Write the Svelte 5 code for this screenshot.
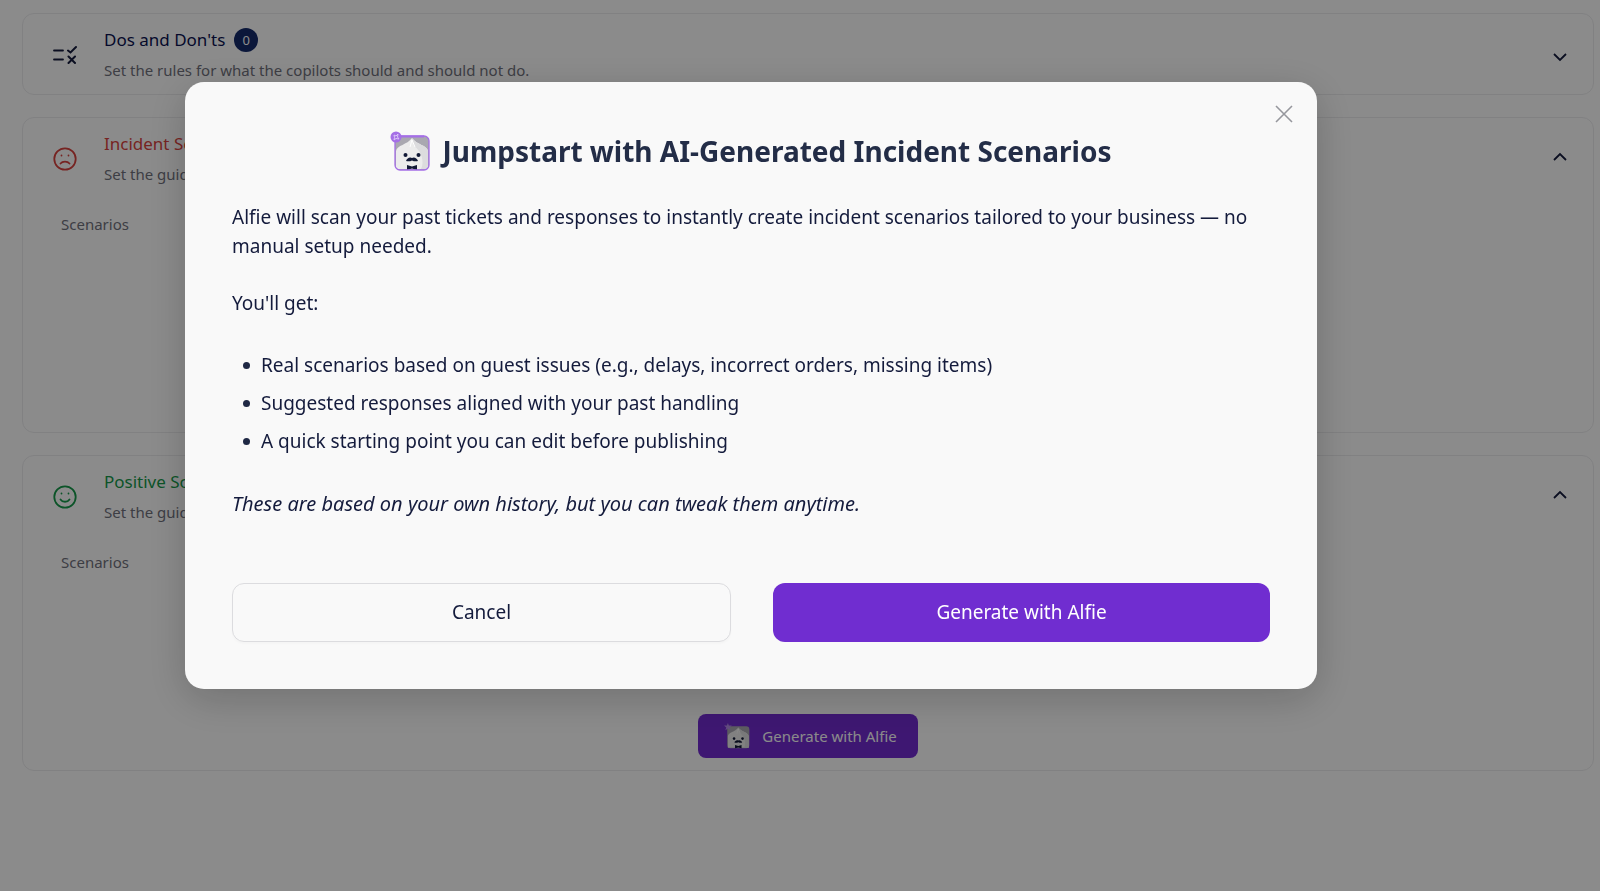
<script>
    let showModal = true;

    let sections = [
        {
            id: "rules",
            icon: "rules",
            title: "Dos and Don'ts",
            text: "Set the rules for what the copilots should and should not do.",
            count: 0,
            open: false
        },
        {
            id: "incident",
            icon: "sad",
            title: "Incident Scenarios",
            text: "Set the guidelines for handling incidents.",
            open: true
        },
        {
            id: "positive",
            icon: "happy",
            title: "Positive Scenarios",
            text: "Set the guidelines for positive feedback.",
            open: true,
            action: true
        }
    ];

    function toggle(section) {
        section.open = !section.open;
        sections = sections;
    }

    function closeModal() {
        showModal = false;
    }
</script>

<!-- the Alfie mascot: a dumpling with a moustache and a bow tie -->
{#snippet alfie(size, framed)}
    <svg class="alfie" width={size} height={size} viewBox="0 0 40 40" aria-hidden="true">
        <rect x="5" y="5" width="34" height="34" rx="5" fill="#a9a8b0" />
        <path d="M6 38V20C7 14 17 14 22 7C27 14 37 14 38 20V38Z" fill="#ececec" />
        <path d="M22 7C27 14 37 14 38 20V38H31C35 30 31 20 24 15Z" fill="#dcdcde" />
        <path d="M22 9L20 16M22 9L25 16" stroke="#fff" stroke-width="1" fill="none" />
        <circle cx="15.500" cy="24" r="2" fill="#111936" />
        <circle cx="28.500" cy="24" r="2" fill="#111936" />
        <path d="M16 30C17 27 20 25.500 22 27C24 25.500 27 27 28 30C26 30.500 24 30.500 22 29.500C20 30.500 18 30.500 16 30Z" fill="#111936" />
        <path d="M17 34L22 35.500L27 34V39L22 37.500L17 39Z" fill="#111936" />
        {#if framed}
            <rect x="5" y="5" width="34" height="34" rx="5" fill="none" stroke="#a56fe6" stroke-width="1.300" />
            <path d="M10 5.500H34" stroke="#a56fe6" stroke-width="2" />
            <circle cx="6" cy="6" r="5.500" fill="#a56fe6" />
            <path d="M4 4L6 5L8 3L7.500 6L9 8L6 7.500L4 9L4.500 6.500Z" fill="none" stroke="#dcc5f8" stroke-width="1" />
        {:else}
            <path d="M6 0L7.500 4L12 4L8.500 7L10 11L6 8.500L2 11L3.500 7L0 4L4.500 4Z" fill="#b58be8" />
        {/if}
    </svg>
{/snippet}

<main>
    {#each sections as section (section.id)}
        <section class="card {section.id}" class:open={section.open}>
            <button class="card-header" aria-expanded={section.open} on:click={() => toggle(section)}>
                <svg class="card-icon" width="24" height="24" viewBox="0 0 24 24" fill="none" stroke="currentColor" stroke-width="1.800" stroke-linecap="round">
                    {#if section.icon == "rules"}
                        <path d="M1 7.500H10M1 16.500H10" />
                        <path d="M15 7.500L17.500 9.500L23 4M15.500 13.500L22 20M22 13.500L15.500 20" stroke-width="2" />
                    {:else}
                        <circle cx="12" cy="12" r="10.700" />
                        <path d="M8.500 8.500V8.600M15.500 8.500V8.600" />
                        {#if section.icon == "sad"}
                            <path d="M7.500 16.500C9.500 14 14.500 14 16.500 16.500" />
                        {:else}
                            <path d="M7.500 14.500C9.500 17.500 14.500 17.500 16.500 14.500" />
                        {/if}
                    {/if}
                </svg>
                <span class="card-text">
                    <span class="card-title">
                        {section.title}
                        {#if section.count !== undefined}
                            <span class="badge">{section.count}</span>
                        {/if}
                    </span>
                    <span class="card-desc">{section.text}</span>
                </span>
                <svg class="chevron" width="14" height="14" viewBox="0 0 14 14" fill="none" stroke="currentColor" stroke-width="1.800">
                    <path d="M1 6L7 12L13 6" />
                </svg>
            </button>
            {#if section.open}
                <div class="card-body">
                    <span class="label">Scenarios</span>
                    {#if section.action}
                        <button class="generate" on:click={() => (showModal = true)}>
                            {@render alfie(26, false)}
                            Generate with Alfie
                        </button>
                    {/if}
                </div>
            {/if}
        </section>
    {/each}
</main>

{#if showModal}
    <div class="overlay">
        <div class="modal" role="dialog" aria-modal="true" aria-labelledby="modal-title">
            <button class="close" aria-label="Close" on:click={closeModal}>
                <svg width="18" height="18" viewBox="0 0 18 18" stroke="currentColor" stroke-width="1.600">
                    <path d="M1 1L17 17M17 1L1 17" />
                </svg>
            </button>
            <h1 id="modal-title">
                {@render alfie(40, true)}
                Jumpstart with AI-Generated Incident Scenarios
            </h1>
            <p>Alfie will scan your past tickets and responses to instantly create incident scenarios tailored to your business — no manual setup needed.</p>
            <p>You'll get:</p>
            <ul>
                <li>Real scenarios based on guest issues (e.g., delays, incorrect orders, missing items)</li>
                <li>Suggested responses aligned with your past handling</li>
                <li>A quick starting point you can edit before publishing</li>
            </ul>
            <p class="note"><em>These are based on your own history, but you can tweak them anytime.</em></p>
            <div class="actions">
                <button class="cancel" on:click={closeModal}>Cancel</button>
                <button class="confirm" on:click={closeModal}>Generate with Alfie</button>
            </div>
        </div>
    </div>
{/if}

<style>
    :global(body) {
        background: #fefefe;
        font-family: "Noto Sans", sans-serif;
        color: #141b3c;
    }
    button {
        font: inherit;
        color: inherit;
        border: 0;
        padding: 0;
        background: none;
        cursor: pointer;
    }
    svg {
        display: block;
        flex: none;
    }

    main {
        display: flex;
        flex-direction: column;
        gap: 22px;
        padding: 13px 6px 24px 22px;
    }
    .card {
        display: flex;
        flex-direction: column;
        box-sizing: border-box;
        border: 1px solid #ebebed;
        border-radius: 12px;
    }
    .card.open {
        min-height: 316px;
    }
    .card-header {
        display: flex;
        align-items: center;
        padding: 12px 26px 10px 30px;
        text-align: left;
    }
    .card-icon {
        margin-right: 27px;
    }
    .card-text {
        display: flex;
        flex: 1;
        flex-direction: column;
        gap: 2px;
    }
    .card-title {
        display: flex;
        align-items: center;
        gap: 9px;
        color: #0a1250;
        font-size: 17px;
        line-height: 28px;
    }
    .incident .card-icon, .incident .card-title {
        color: #d8433f;
    }
    .positive .card-icon, .positive .card-title {
        color: #16994a;
    }
    .badge {
        width: 24px;
        height: 24px;
        border-radius: 12px;
        background: #142a6b;
        color: #fcfcfc;
        font-size: 13px;
        line-height: 24px;
        text-align: center;
    }
    .card-desc, .label {
        color: #70717c;
        font-size: 15px;
        line-height: 28px;
    }
    .open .chevron {
        transform: rotate(180deg);
    }
    .card-body {
        display: flex;
        flex: 1;
        flex-direction: column;
        padding: 12px 38px;
    }
    .generate {
        display: flex;
        align-items: center;
        align-self: center;
        gap: 12px;
        height: 44px;
        margin-top: auto;
        padding: 0 21px 0 26px;
        border-radius: 8px;
        background: #722bd0;
        color: #fcfcfc;
        font-size: 15px;
    }

    .overlay {
        position: fixed;
        inset: 0;
        display: flex;
        align-items: center;
        justify-content: center;
        padding: 0 98px 121px 0;
        background: rgba(0, 0, 0, 0.45);
    }
    .modal {
        position: relative;
        box-sizing: border-box;
        width: 100%;
        max-width: 1132px;
        padding: 47px;
        border-radius: 19px;
        background: #f9f9f9;
        box-shadow: 0 10px 40px rgba(0, 0, 0, 0.2);
        font-size: 19px;
        line-height: 29px;
    }
    .close {
        position: absolute;
        top: 23px;
        right: 24px;
        color: #96979d;
    }
    h1 {
        display: flex;
        align-items: center;
        justify-content: center;
        gap: 12px;
        margin: 0 0 30px;
        color: #232d47;
        font-size: 28px;
        font-weight: 700;
        line-height: 44px;
    }
    p {
        margin: 0 0 28px;
    }
    ul {
        display: flex;
        flex-direction: column;
        gap: 9px;
        margin: 33px 0;
        padding-left: 11px;
        list-style: none;
    }
    li {
        display: flex;
        align-items: center;
        gap: 11px;
    }
    li::before {
        content: "";
        width: 7px;
        height: 7px;
        border-radius: 50%;
        background: #1f2844;
    }
    .note {
        font-size: 20px;
    }
    .actions {
        display: flex;
        gap: 42px;
        margin-top: 65px;
    }
    .actions button {
        flex: 1;
        height: 59px;
        border-radius: 12px;
    }
    .actions .cancel {
        border: 1px solid #dcdcdf;
        box-shadow: 0 2px 2px rgba(0, 0, 0, 0.02);
    }
    .actions .confirm {
        background: #702dd0;
        color: #fff;
    }
</style>
